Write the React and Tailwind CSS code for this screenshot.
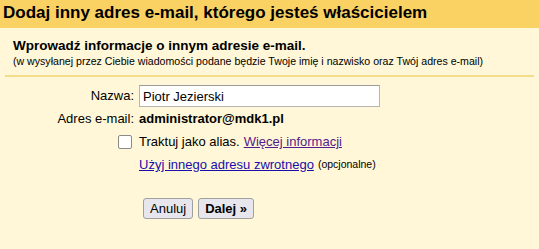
export default function App() {
  return (
    <div className="w-[539px] h-[249px] bg-[#fff7d7] font-['Liberation_Sans',Arial,sans-serif] text-black overflow-hidden">
      <div className="h-[28px] bg-[#fad163] px-[3px] pt-[3px] text-[17px] font-bold leading-[20px]">
        Dodaj inny adres e-mail, którego jesteś właścicielem
      </div>
      <div className="mx-[5px] pt-[10px] pb-[7px] px-[8px] border-b-2 border-[#f5dc8a]">
        <div className="text-[13.5px] font-bold leading-[16px]">Wprowadź informacje o innym adresie e-mail.</div>
        <div className="text-[10.6px] leading-[13px] mt-[1px]">
          (w wysyłanej przez Ciebie wiadomości podane będzie Twoje imię i nazwisko oraz Twój adres e-mail)
        </div>
      </div>
      <div className="pt-[8px] text-[13px]">
        <div className="flex items-center h-[22px]">
          <div className="w-[138px] text-right pr-[4px]">Nazwa:</div>
          <input
            className="ml-[1px] w-[241px] h-[22px] border border-[#b5b5b5] border-t-[#9a9a9a] bg-white px-[3px] text-[13px] outline-none"
            defaultValue="Piotr Jezierski"
          />
        </div>
        <div className="flex items-center h-[22px] mt-[1px]">
          <div className="w-[138px] text-right pr-[4px]">Adres e-mail:</div>
          <div className="font-bold pl-[1px]">administrator@mdk1.pl</div>
        </div>
        <div className="flex items-center h-[22px] mt-[1px]">
          <div className="w-[118px]" />
          <div className="w-[14px] h-[14px] border border-[#8a8a8a] rounded-[2px] bg-white mr-[7px]" />
          <span>Traktuj jako alias.</span>
          <a className="ml-[4px] text-[#551a8b] underline">Więcej informacji</a>
        </div>
        <div className="flex items-center h-[22px] mt-[1px] pl-[139px]">
          <a className="text-[#1a0dab] underline">Użyj innego adresu zwrotnego</a>
          <span className="ml-[4px] text-[10.5px]">(opcjonalne)</span>
        </div>
        <div className="flex gap-[5px] pl-[143px] mt-[22px]">
          <button className="h-[21px] px-[6px] border border-[#a0a0a0] rounded-[3px] bg-[#e6e6ec] text-[13px]">Anuluj</button>
          <button className="h-[21px] px-[6px] border border-[#a0a0a0] rounded-[3px] bg-[#e6e6ec] text-[13px] font-bold">Dalej »</button>
        </div>
      </div>
    </div>
  );
}
